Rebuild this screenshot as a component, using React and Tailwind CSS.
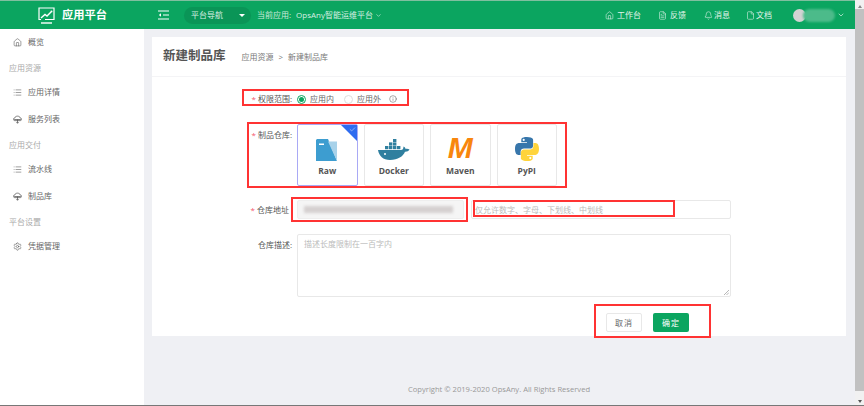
import { Home, FileText, Bell, File, List, Settings, ChevronDown, Check, Info } from 'lucide-react'

const font = { cjk: "font-['Open_Sans','Noto_Sans_CJK_SC',sans-serif]" }

function NavLink({ icon: Icon, label, className }) {
  return (
    <div className={`flex items-center ${className}`}>
      <Icon className="w-[9px] h-[9px]" strokeWidth={1.5} />
      <span>{label}</span>
    </div>
  )
}

// cloud with a down arrow, lucide's one is too plain for this sidebar
function CloudIcon({ className }) {
  return (
    <svg className={className} viewBox="0 0 12 12" fill="none" stroke="currentColor" strokeWidth="1">
      <path d="M2.500 7.500C1 7.500.5 6.500.5 5.700.5 4.700 1.300 4 2.300 4 2.700 2.500 4.200 1.500 6 1.500s3.300 1 3.700 2.500c1 0 1.800.7 1.800 1.700 0 .8-.5 1.800-2 1.800z" />
      <path d="M1.500 6h9M6 6v5M4.500 9.500L6 11l1.500-1.500" />
    </svg>
  )
}

function SideItem({ icon: Icon, label, className = '' }) {
  return (
    <div className={`flex items-center h-[14px] pl-[13px] gap-[6px] text-[#666] ${className}`}>
      <Icon className="w-[9px] h-[9px] text-[#555]" strokeWidth={1.5} />
      <span>{label}</span>
    </div>
  )
}

function SideGroup({ label, className = '' }) {
  return <div className={`pl-[9px] h-[14px] leading-[14px] text-[#aaa] ${className}`}>{label}</div>
}

function LogoIcon() {
  return (
    <svg width="17" height="17" viewBox="0 0 17 17" fill="none" stroke="white" strokeWidth="1.2">
      <path d="M3 12.500H1V1h15v11.500H7" />
      <path d="M3 11l4-3.500 2 1.500 4-4" strokeWidth="1.4" />
      <circle cx="13.500" cy="4.500" r="1" fill="white" stroke="none" />
      <path d="M3 16h11" strokeWidth="1.4" />
    </svg>
  )
}

function RawIcon() {
  return (
    <svg width="22" height="22" viewBox="0 0 22 22">
      <path d="M1 0h11l9 22H0V1z" fill="#3d9dd0" />
      <path d="M12 2.500h9V22z" fill="#a8d2ea" />
      <rect x="3" y="4.500" width="5" height="1.500" fill="white" />
    </svg>
  )
}

function DockerIcon() {
  return (
    <svg width="32" height="22" viewBox="0 0 32 22">
      <g fill="#2f7f9f">
        <rect x="7" y="7" width="3.400" height="3.200" />
        <rect x="11" y="7" width="3.400" height="3.200" />
        <rect x="15" y="7" width="3.400" height="3.200" />
        <rect x="11" y="3.400" width="3.400" height="3.200" />
        <rect x="15" y="3.400" width="3.400" height="3.200" />
        <rect x="15" y="0" width="3.400" height="3" />
        <rect x="19" y="7" width="3.400" height="3.200" />
      </g>
      <path d="M0 11h23c1.500 0 2.500-1 2.500-3.500 1.200.4 2 1.400 2.100 2.600 1.200-.5 2.600-.3 3.900.5-1 1.700-2.500 2.300-4.500 2.200C25 17.500 20 21 12 21 5 21 1 17 0 11z" fill="#2f7f9f" />
      <circle cx="7" cy="15" r="1" fill="white" />
    </svg>
  )
}

function PythonIcon() {
  return (
    <svg width="24" height="24" viewBox="0 0 24 24">
      <path d="M11.900 0C6 0 6.300 2.600 6.300 2.600v2.700h5.700v.8H4C4 6.100 0 5.700 0 12s3.500 6 3.500 6h2.100v-2.900s-.1-3.500 3.400-3.500h5.800s3.300.1 3.300-3.200V3.100S18.600 0 11.900 0zM8.700 1.800a1.100 1.100 0 1 1 0 2.200 1.100 1.100 0 0 1 0-2.200z" fill="#3776ab" />
      <path d="M12.100 24c5.900 0 5.600-2.600 5.600-2.600v-2.700H12v-.8h8c0 0 4 .4 4-5.900s-3.500-6-3.500-6h-2.100v2.900s.1 3.500-3.400 3.500H9.200s-3.300-.1-3.300 3.200v5.300S5.400 24 12.100 24zm3.200-1.800a1.100 1.100 0 1 1 0-2.200 1.100 1.100 0 0 1 0 2.200z" fill="#ffd43b" />
    </svg>
  )
}

function RepoCard({ name, selected, children }) {
  return (
    <div className={`relative w-[60.5px] h-[62px] flex flex-col items-center border rounded-[2px] bg-white ${selected ? 'border-[#a9a9f5]' : 'border-[#e8e8e8]'}`}>
      <div className="h-[36px] w-full flex items-end justify-center">{children}</div>
      <div className="mt-[4px] font-bold text-[8.5px] leading-[12px] text-[#555] font-['Open_Sans',sans-serif]">{name}</div>
      {selected && (
        <>
          <div className="absolute top-0 right-0 w-0 h-0 border-t-[16px] border-l-[16px] border-t-[#2f6cf0] border-l-transparent" />
          <Check className="absolute top-[1px] right-[1px] w-[7px] h-[7px] text-white" strokeWidth={1.5} />
        </>
      )}
    </div>
  )
}

function RedBox({ className }) {
  return <div className={`absolute z-10 border-2 border-[#f33] pointer-events-none ${className}`} />
}

export default function App() {
  return (
    <div className={`relative w-[864px] h-[406px] overflow-hidden flex flex-col text-[8px] bg-[#eff0f4] ${font.cjk}`}>
      {/* Header */}
      <header className="h-[29px] shrink-0 border-t border-[#7fbf9f] bg-[#0ba560] flex items-center text-white">
        <div className="w-[144px] shrink-0 flex items-center pl-[38px] gap-[7px]">
          <LogoIcon />
          <span className="text-[11.25px] font-bold">应用平台</span>
        </div>
        <svg className="ml-[14px]" width="11" height="10" viewBox="0 0 11 10" stroke="white" strokeWidth="1" fill="white">
          <path d="M0 1h11M5 5h6M0 9h11" />
          <path d="M3 3.200L.8 5 3 6.800z" stroke="none" />
        </svg>
        <div className="ml-[15px] w-[67px] h-[17px] rounded-full bg-[#0a9557] flex items-center justify-between pl-[7px] pr-[6px] text-[#d7efe3]">
          <span>平台导航</span>
          <span className="w-0 h-0 border-x-[3px] border-x-transparent border-t-[3px] border-t-white" />
        </div>
        <span className="ml-[6px] text-[#cdeadb]">当前应用:</span>
        <span className="ml-[5px] text-[#d7efe3] flex items-center gap-[2px]">OpsAny智能运维平台<ChevronDown className="w-[7px] h-[7px]" /></span>
        <div className="ml-auto flex items-center text-[#e3f4eb]">
          <NavLink icon={Home} label="工作台" className="gap-[3px]" />
          <NavLink icon={FileText} label="反馈" className="ml-[17px] gap-[3px]" />
          <NavLink icon={Bell} label="消息" className="ml-[18px] gap-[1px]" />
          <NavLink icon={File} label="文档" className="ml-[16px] gap-[1px]" />
          <div className="ml-[21px] w-[13px] h-[13px] rounded-full bg-[#d3d3d3]" />
          <div className="-ml-[3px] w-[32px] h-[13px] rounded-full bg-[#4cbb8a] blur-[1px]" />
          <ChevronDown className="ml-[2px] mr-[10px] w-[8px] h-[8px]" />
        </div>
        <div className="w-[9px] h-full" />
      </header>

      <div className="flex-1 flex min-h-0">
        {/* Sidebar */}
        <aside className="w-[144px] shrink-0 bg-white pt-[6px]">
          <SideItem icon={Home} label="概览" />
          <SideGroup label="应用资源" className="mt-[12px]" />
          <SideItem icon={List} label="应用详情" className="mt-[10px]" />
          <SideItem icon={CloudIcon} label="服务列表" className="mt-[13px]" />
          <SideGroup label="应用交付" className="mt-[12px]" />
          <SideItem icon={List} label="流水线" className="mt-[10px]" />
          <SideItem icon={CloudIcon} label="制品库" className="mt-[13px]" />
          <SideGroup label="平台设置" className="mt-[12px]" />
          <SideItem icon={Settings} label="凭据管理" className="mt-[10px]" />
        </aside>

        {/* Main */}
        <main className="flex-1 min-w-0 flex flex-col pl-[8px] pr-[9px] pt-[8px]">
          <div className="w-[694px] h-[39px] bg-white flex items-center pl-[11px]">
            <h1 className="text-[12.5px] font-bold text-[#555]">新建制品库</h1>
            <span className="ml-[16px] text-[#777]">应用资源</span>
            <span className="ml-[5px] text-[#777]">&gt;</span>
            <span className="ml-[5px] text-[#777]">新建制品库</span>
          </div>
          <div className="w-[694px] h-[260px] bg-white border-t border-[#f4f4f6] pt-[16px] text-[#666]">
            {/* Scope */}
            <div className="flex items-center h-[12px]">
              <label className="w-[140px] text-right text-[#555]"><span className="text-[#f5576c]">* </span>权限范围:</label>
              <span className="ml-[5px] w-[9px] h-[9px] rounded-full border border-[#0ba560] flex items-center justify-center"><span className="w-[5px] h-[5px] rounded-full bg-[#0ba560]" /></span>
              <span className="ml-[4px]">应用内</span>
              <span className="ml-[10px] w-[9px] h-[9px] rounded-full border border-[#ddd]" />
              <span className="ml-[4px]">应用外</span>
              <Info className="ml-[8px] w-[8px] h-[8px] text-[#555]" strokeWidth={1.5} />
            </div>
            {/* Repos */}
            <div className="flex mt-[19px]">
              <label className="w-[140px] text-right text-[#555] pt-[5px]"><span className="text-[#f5576c]">* </span>制品仓库:</label>
              <div className="ml-[5px] flex gap-[6px]">
                <RepoCard name="Raw" selected><RawIcon /></RepoCard>
                <RepoCard name="Docker"><DockerIcon /></RepoCard>
                <RepoCard name="Maven">
                  <span className="text-[#f8860d] text-[30px] leading-[26px] font-bold italic font-['Liberation_Sans',sans-serif]">M</span>
                </RepoCard>
                <RepoCard name="PyPI"><PythonIcon /></RepoCard>
              </div>
            </div>
            {/* Address */}
            <div className="flex items-center mt-[14px]">
              <label className="w-[140px] text-right text-[#555] pr-[3px]"><span className="text-[#f5576c]">* </span>仓库地址</label>
              <div className="ml-[5px] w-[167px] h-[19px] bg-[#f5f5f5] border border-[#eee] rounded-[2px] flex items-center px-[6px]">
                <div className="w-[149px] h-[7px] bg-[#d5d0d0] blur-[1.5px]" />
              </div>
              <div className="ml-[7px] w-[260px] h-[19px] border border-[#e8e8e8] rounded-[2px] flex items-center pl-[3px] text-[#bbb]">仅允许数字、字母、下划线、中划线</div>
            </div>
            {/* Description */}
            <div className="flex mt-[15px]">
              <label className="w-[140px] text-right text-[#555] pt-[5px]">仓库描述:</label>
              <div className="relative ml-[5px] w-[434px] h-[63px] border border-[#e8e8e8] rounded-[2px] px-[6px] pt-[3px] text-[#bbb]">
                描述长度限制在一百字内
                <svg className="absolute right-[1px] bottom-[1px]" width="5" height="5" viewBox="0 0 5 5" stroke="#888" strokeWidth="0.6"><path d="M0 5L5 0M2.500 5L5 2.500" /></svg>
              </div>
            </div>
            {/* Actions */}
            <div className="flex mt-[16px] ml-[454px] gap-[11px]">
              <button className="w-[36px] h-[19px] border border-[#e8e8e8] rounded-[2px] text-[#666] tracking-[1px]">取消</button>
              <button className="w-[36px] h-[19px] bg-[#0ba560] rounded-[2px] text-white tracking-[1px]">确定</button>
            </div>
          </div>
          <footer className="mt-[48px] pl-[256px] text-[7.6px] text-[#999] font-['Open_Sans',sans-serif]">Copyright © 2019-2020 OpsAny. All Rights Reserved</footer>
        </main>

        {/* Scrollbar */}
        <div className="absolute right-0 top-0 bottom-0 w-[9px] bg-[#f1f1f1] flex flex-col items-center">
          <div className="h-[9px] flex items-center"><span className="w-0 h-0 border-x-[2px] border-x-transparent border-b-[3px] border-b-[#888] mt-[3px]" /></div>
          <div className="w-full h-[382px] bg-[#c1c1c1]" />
          <div className="mt-auto mb-[3px] w-0 h-0 border-x-[2px] border-x-transparent border-t-[3px] border-t-[#555]" />
        </div>
      </div>

      <div className="absolute left-0 right-0 bottom-0 h-[1px] bg-[#777]" />

      {/* Annotation boxes */}
      <RedBox className="left-[242px] top-[89px] w-[167px] h-[17px]" />
      <RedBox className="left-[247px] top-[122px] w-[320px] h-[66px]" />
      <RedBox className="left-[291px] top-[197px] w-[177px] h-[25px]" />
      <RedBox className="left-[473px] top-[200px] w-[202px] h-[17px]" />
      <RedBox className="left-[594px] top-[304px] w-[117px] h-[34px]" />
    </div>
  )
}
